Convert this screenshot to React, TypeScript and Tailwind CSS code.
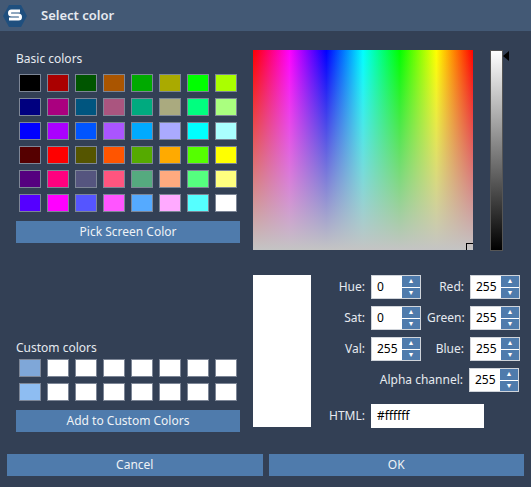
const basic = [
  ["#000000", "#aa0000", "#005500", "#aa5500", "#00aa00", "#aaaa00", "#00ff00", "#aaff00"],
  ["#00007f", "#aa007f", "#00557f", "#aa557f", "#00aa7f", "#aaaa7f", "#00ff7f", "#aaff7f"],
  ["#0000ff", "#aa00ff", "#0055ff", "#aa55ff", "#00aaff", "#aaaaff", "#00ffff", "#aaffff"],
  ["#550000", "#ff0000", "#555500", "#ff5500", "#55aa00", "#ffaa00", "#55ff00", "#ffff00"],
  ["#55007f", "#ff007f", "#55557f", "#ff557f", "#55aa7f", "#ffaa7f", "#55ff7f", "#ffff7f"],
  ["#5500ff", "#ff00ff", "#5555ff", "#ff55ff", "#55aaff", "#ffaaff", "#55ffff", "#ffffff"],
];

function Swatch({ color }: { color: string }) {
  return <div className="w-[22px] h-[18px] border border-[#7d8696]" style={{ background: color }} />;
}

function Spin({ label, value, w = "w-[62px]" }: { label: string; value: string; w?: string }) {
  return (
    <div className="flex items-center gap-[6px] h-[24px]">
      <span className={`${w} text-right`}>{label}</span>
      <div className="flex w-[50px] h-[24px] border border-[#d0d4da] bg-white">
        <div className="flex-1 text-black pl-[5px] leading-[22px]">{value}</div>
        <div className="w-[18px] flex flex-col gap-px bg-white">
          <div className="flex-1 bg-[#4f7bac] flex items-center justify-center text-white text-[7px]">▲</div>
          <div className="flex-1 bg-[#4f7bac] flex items-center justify-center text-white text-[7px]">▼</div>
        </div>
      </div>
    </div>
  );
}

export default function App() {
  return (
    <div className="w-[531px] h-[487px] bg-[#334055] text-[12px] text-[#e6eaf0] font-['Noto_Sans','Open_Sans',sans-serif] flex flex-col">
      {/* Title bar */}
      <div className="h-[31px] bg-[#435975] flex items-center pl-[3px] gap-[14px] shrink-0">
        <svg width="24" height="24" viewBox="0 0 24 24">
          <polygon points="6,1 18,1 24,12 18,23 6,23 0,12" fill="#1f4f7e" />
          <path d="M17 7H8.5a2 2 0 0 0 0 4h7a2 2 0 0 1 0 4H6" stroke="#fff" strokeWidth="3" fill="none" />
        </svg>
        <span className="font-semibold text-[13px]">Select color</span>
      </div>

      <div className="flex pl-[16px] pt-[19px]">
        {/* Left column */}
        <div className="w-[224px] flex flex-col">
          <div className="h-[16px] leading-[16px] mt-[1px]">Basic colors</div>
          <div className="grid grid-cols-8 gap-x-[6px] gap-y-[6px] ml-[3px] mt-[7px] w-[218px]">
            {basic.flat().map((c, i) => <Swatch key={i} color={c} />)}
          </div>
          <button className="mt-[9px] h-[22px] bg-[#4f7bac] text-[#eef2f6]">Pick Screen Color</button>

          <div className="mt-[97px] h-[16px] leading-[16px]">Custom colors</div>
          <div className="grid grid-cols-8 gap-[6px] ml-[3px] mt-[3px] w-[218px]">
            {Array.from({ length: 16 }).map((_, i) => (
              <Swatch key={i} color={i % 8 === 0 ? (i === 0 ? "#7fa7d8" : "#8ebdf2") : "#ffffff"} />
            ))}
          </div>
          <button className="mt-[9px] h-[22px] bg-[#4f7bac] text-[#eef2f6]">Add to Custom Colors</button>
        </div>

        {/* Right column */}
        <div className="ml-[13px] flex flex-col">
          <div className="flex">
            <div className="w-[220px] h-[200px] bg-[linear-gradient(to_right,#ff0000,#ff00ff,#0000ff,#00ffff,#00ff00,#ffff00,#ff0000)] relative">
              <div className="absolute inset-0 bg-[linear-gradient(to_bottom,rgba(200,200,200,0),#c4c4c4)]" />
              <div className="absolute right-0 bottom-0 w-[7px] h-[7px] border-l border-t border-black" />
            </div>
            <div className="ml-[17px] w-[13px] h-[201px] bg-[linear-gradient(to_bottom,#ffffff,#000000)] border border-[#555]" />
            <div className="w-0 h-0 mt-[1px] border-y-[5px] border-y-transparent border-r-[6px] border-r-black" />
          </div>

          <div className="flex mt-[24px]">
            <div className="w-[58px] h-[152px] bg-white" />
            <div className="flex flex-col ml-[-8px]">
              <div className="flex gap-[6px]">
                <div className="flex flex-col gap-[7px]">
                  <Spin label="Hue:" value="0" />
                  <Spin label="Sat:" value="0" />
                  <Spin label="Val:" value="255" />
                </div>
                <div className="flex flex-col gap-[7px]">
                  <Spin label="Red:" value="255" w="w-[37px]" />
                  <Spin label="Green:" value="255" w="w-[37px]" />
                  <Spin label="Blue:" value="255" w="w-[37px]" />
                </div>
              </div>
              <div className="flex justify-end mt-[7px] pr-[1px]">
                <Spin label="Alpha channel:" value="255" w="w-[90px]" />
              </div>
              <div className="flex items-center gap-[6px] mt-[12px]">
                <span className="w-[62px] text-right">HTML:</span>
                <div className="w-[113px] h-[24px] bg-white text-black pl-[6px] leading-[24px]">#ffffff</div>
              </div>
            </div>
          </div>
        </div>
      </div>

      <div className="flex gap-[6px] px-[7px] mt-[22px]">
        <button className="flex-1 h-[22px] bg-[#4f7bac] text-[#eef2f6]">Cancel</button>
        <button className="flex-1 h-[22px] bg-[#4f7bac] text-[#eef2f6]">OK</button>
      </div>
    </div>
  );
}
